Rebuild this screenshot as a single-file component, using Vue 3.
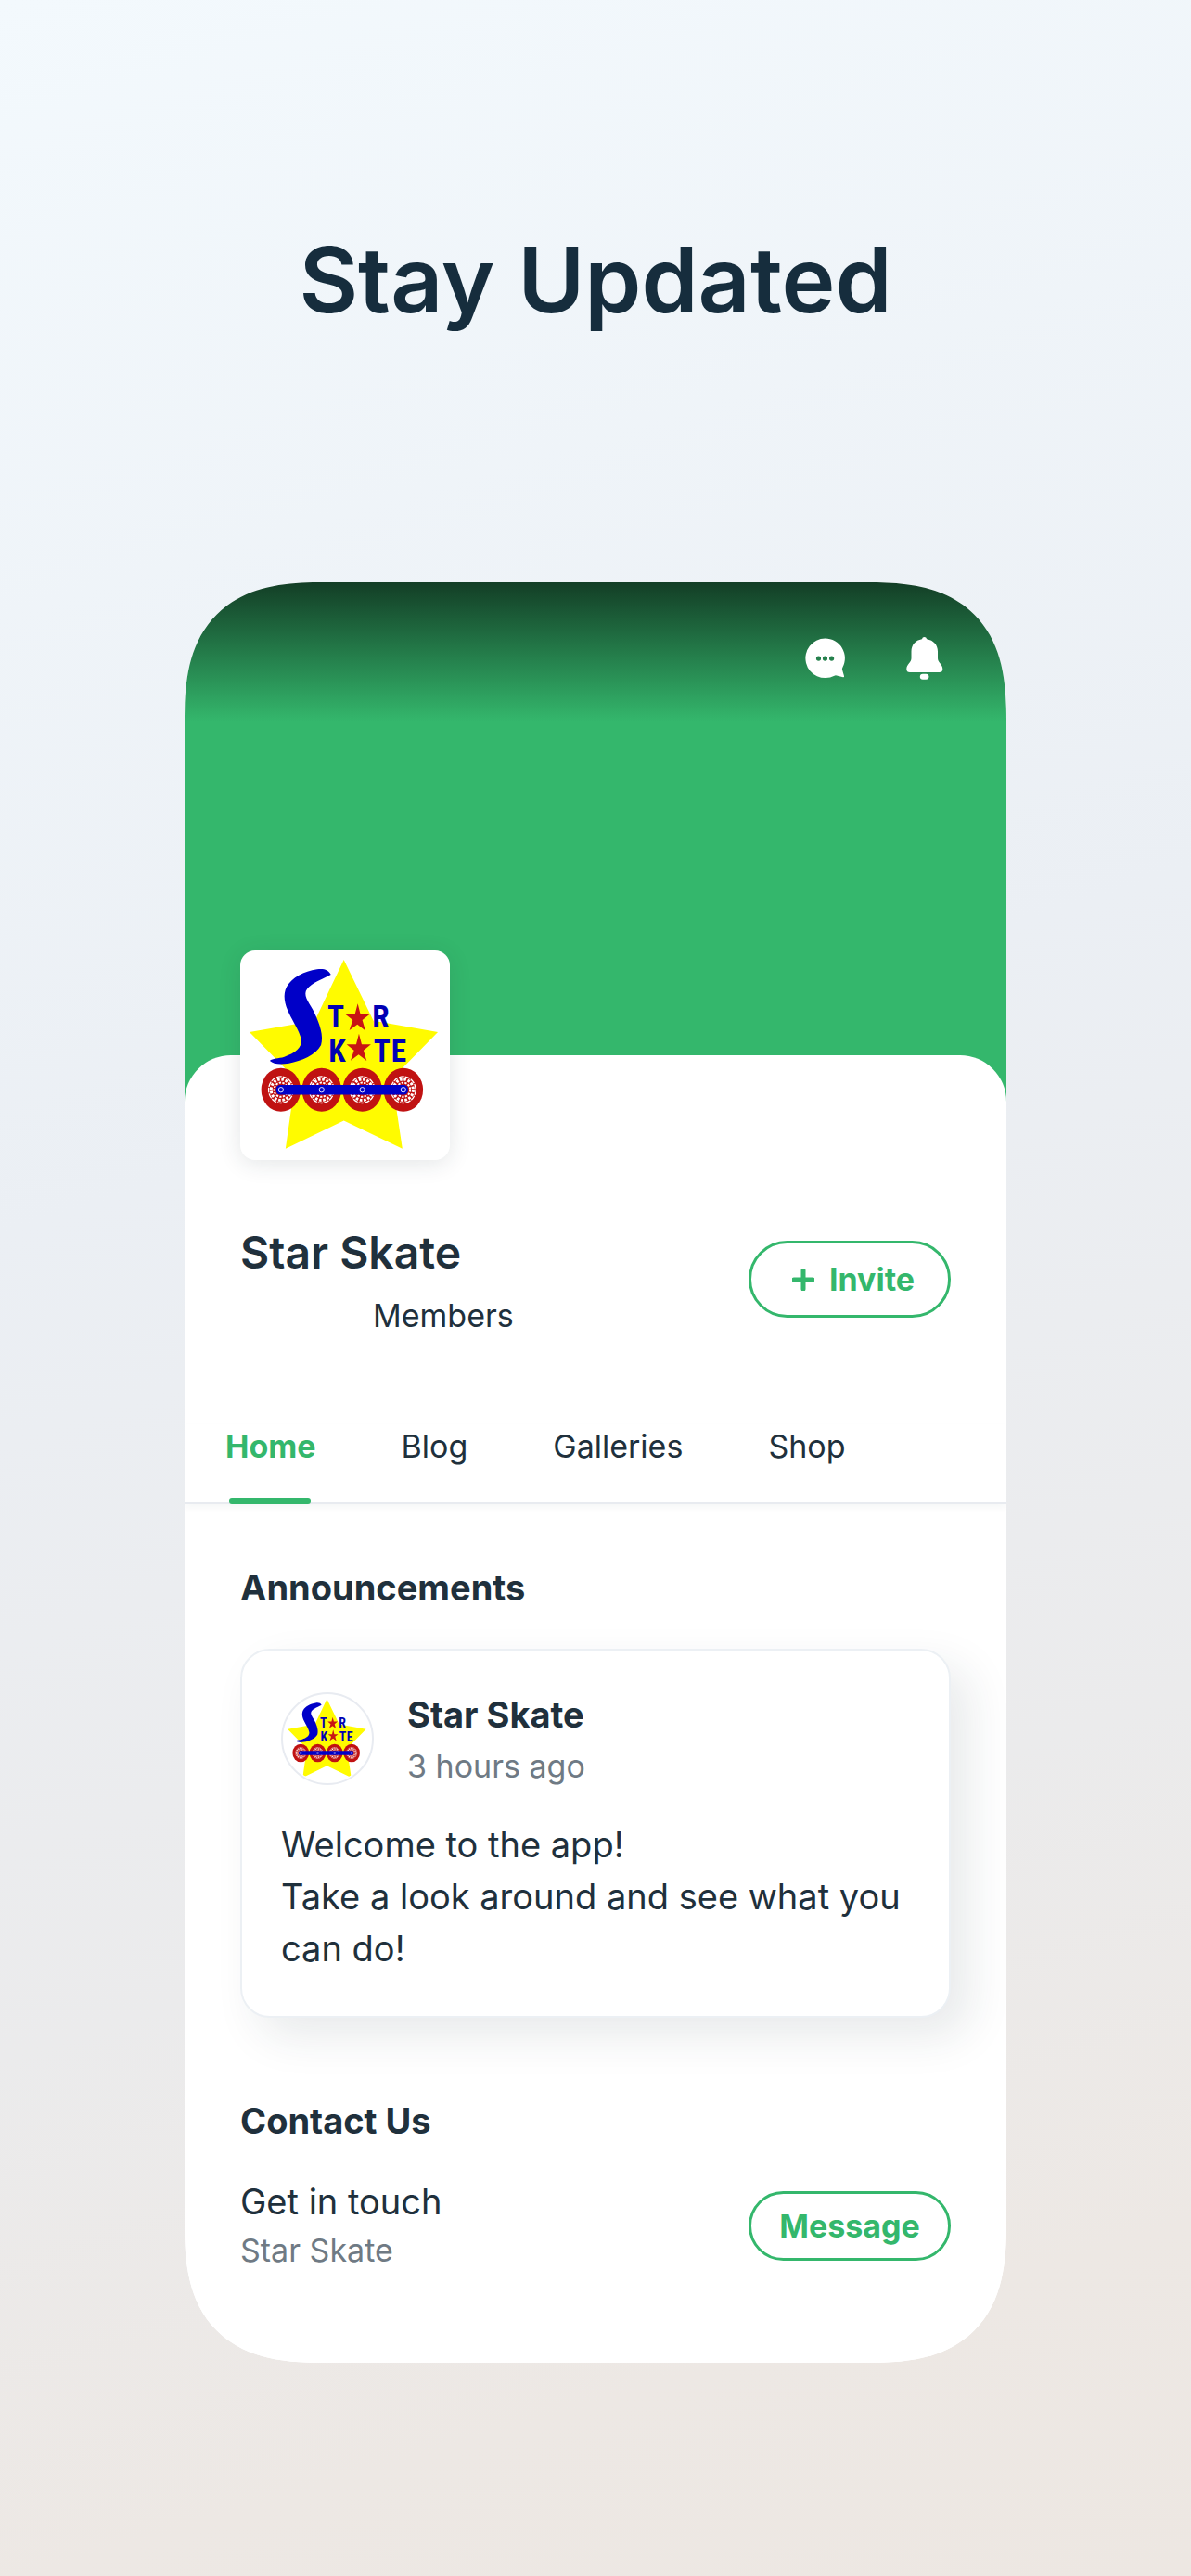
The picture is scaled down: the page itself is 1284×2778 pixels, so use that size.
<script setup>
import { ref } from 'vue'

const tabs = ['Home', 'Blog', 'Galleries', 'Shop']
const active = ref('Home')
const wheels = [188, 320, 452, 585]
</script>

<template>
  <main class="page">
    <h1 class="headline">Stay Updated</h1>

    <section class="phone">
      <header class="cover">
        <button class="icon-button" type="button" aria-label="Chat">
          <svg viewBox="0 0 44 44" width="44" height="44">
            <path
              fill="#fff"
              fill-rule="evenodd"
              d="M21.500 0.500A21.300 21.300 0 1 0 31.500 40.700Q32.500 40 34 40.400L41 42.300Q42.300 42.500 42 41L40.100 34.500Q39.700 33.200 40.300 32A21.300 21.300 0 0 0 21.500 0.500ZM14.500 19.500a2.600 2.600 0 1 1 0 5.200a2.600 2.600 0 1 1 0-5.200ZM21.500 19.500a2.600 2.600 0 1 1 0 5.200a2.600 2.600 0 1 1 0-5.200ZM28.600 19.500a2.600 2.600 0 1 1 0 5.200a2.600 2.600 0 1 1 0-5.200Z"
            />
          </svg>
        </button>
        <button class="icon-button" type="button" aria-label="Notifications">
          <svg viewBox="0 0 40 46" width="40" height="46">
            <path
              fill="#fff"
              d="M19.500 0Q21.500 0 22.200 2.200C29.500 3.400 34 8.500 34 15.500V23C34 27.500 39.300 29.500 39.300 34.500Q39.300 38 35.500 38H4Q0.300 38 0.300 34.500C0.300 29.500 5.500 27.500 5.500 23V15.500C5.500 8.500 9.800 3.400 16.900 2.200Q17.500 0 19.500 0Z"
            />
            <rect x="14.800" y="39.800" width="9.600" height="6" rx="3" fill="#fff" />
          </svg>
        </button>
      </header>

      <div class="sheet">
        <div class="logo-tile">
          <svg class="logo" viewBox="57 45 678 680" role="img" aria-label="Star Skate logo">
            <g id="logo-art">
              <path fill="#fffb00" d="M392 75 488 273 697 310 548 462 582 688 392 597 203 688 235 462 86 310 298 273Z" />
              <path
                fill="#0000c8"
                d="M350 123C341 108 329 103 305 106C262 113 224 133 207 162C193 188 200 218 214 248C228 278 248 305 254 334C258 360 232 379 199 390C180 396 160 394 152 403C164 415 190 415 214 411C254 404 302 384 318 352C327 322 314 283 297 248C283 219 262 198 269 177C277 156 310 143 350 123Z"
              />
              <g class="logo-letters" text-anchor="middle">
                <text x="366" y="296">T</text>
                <text x="512" y="296">R</text>
                <text x="370" y="405">K</text>
                <text x="516" y="405">T</text>
                <text x="570" y="405">E</text>
              </g>
              <path fill="#c81414" d="M437 217 446 252 476 252 452 271 462 305 436 285 410 304 421 271 397 252 428 252Z" />
              <path fill="#c81414" d="M441 315 450 350 480 350 456 369 466 403 440 383 414 402 425 369 401 350 432 350Z" />
              <g v-for="x in wheels" :key="x">
                <ellipse :cx="x" cy="497" rx="64" ry="71" fill="#c01212" />
                <ellipse :cx="x" cy="497" rx="40" ry="43" fill="none" stroke="#fff" stroke-width="4" stroke-dasharray="17 3" />
                <ellipse :cx="x" cy="497" rx="32" ry="34" fill="none" stroke="#fff" stroke-width="9" stroke-dasharray="8 5" />
                <ellipse :cx="x" cy="497" rx="22" ry="23" fill="none" stroke="#fff" stroke-width="6" stroke-dasharray="7 4" />
              </g>
              <rect x="172" y="481" width="428" height="32" rx="14" fill="#0000c8" />
              <g v-for="x in wheels" :key="x">
                <circle :cx="x" cy="497" r="15" fill="#0000c8" />
                <circle :cx="x" cy="497" r="8" fill="none" stroke="#dfe4ff" stroke-width="3" />
              </g>
            </g>
          </svg>
        </div>

        <div class="profile">
          <div>
            <h2 class="name">Star Skate</h2>
            <p class="members">Members</p>
          </div>
          <button class="pill invite" type="button">
            <svg viewBox="0 0 24 24" width="24" height="24" aria-hidden="true">
              <path d="M12 2V22M2 12H22" stroke="currentColor" stroke-width="5" stroke-linecap="round" />
            </svg>
            Invite
          </button>
        </div>

        <nav class="tabs">
          <a
            v-for="tab in tabs"
            :key="tab"
            href="#"
            class="tab"
            :class="{ active: tab === active }"
            @click.prevent="active = tab"
          >{{ tab }}</a>
        </nav>

        <h3 class="section-title announcements">Announcements</h3>
        <article class="card">
          <div class="author">
            <svg class="avatar" viewBox="57 45 678 680" role="img" aria-label="Star Skate"><use href="#logo-art" /></svg>
            <div>
              <h4 class="author-name">Star Skate</h4>
              <p class="muted">3 hours ago</p>
            </div>
          </div>
          <p class="message">Welcome to the app!<br />Take a look around and see what you can do!</p>
        </article>

        <h3 class="section-title contact">Contact Us</h3>
        <div class="contact-row">
          <div>
            <p class="contact-title">Get in touch</p>
            <p class="muted">Star Skate</p>
          </div>
          <button class="pill" type="button">Message</button>
        </div>
      </div>
    </section>
  </main>
</template>

<style>
body {
  margin: 0;
}
</style>

<style scoped>
.page {
  box-sizing: border-box;
  min-height: 100vh;
  padding: 242px 0 230px;
  background: linear-gradient(163deg, #f3f9fd 0%, #ebeff4 42%, #ebebec 70%, #ede8e4 88%, #ede7e2 100%);
  color: #20303c;
  font-family: Inter, 'Liberation Sans', sans-serif;
}

h1,
h2,
h3,
h4,
p {
  margin: 0;
}

.headline {
  color: #162d3d;
  font-size: 98px;
  font-weight: 600;
  line-height: 120px;
  text-align: center;
}

.phone {
  width: 69%;
  margin: 266px auto 0;
  overflow: hidden;
  border-radius: 124px;
  background: #fff;
}

@supports (corner-shape: superellipse(1.4)) {
  .phone {
    border-radius: 150px;
    corner-shape: superellipse(1.4);
  }
}

.cover {
  box-sizing: border-box;
  display: flex;
  justify-content: flex-end;
  align-items: flex-start;
  gap: 65px;
  height: 560px;
  padding: 58px 68px 0;
  background: linear-gradient(#133e26, #34b76c 150px);
}

.icon-button {
  display: flex;
  align-items: center;
  height: 48px;
  padding: 0;
  border: 0;
  background: none;
}

.sheet {
  margin-top: -50px;
  padding: 0 60px 97px;
  border-radius: 50px 50px 0 0;
  background: #fff;
}

.logo-tile {
  position: relative;
  top: -113px;
  width: 226px;
  height: 226px;
  margin-bottom: -113px;
  overflow: hidden;
  border-radius: 16px;
  background: #fff;
  box-shadow: 0 4px 24px rgba(32, 48, 60, 0.12);
}

.logo {
  display: block;
  width: 100%;
  height: 100%;
}

.logo-letters {
  fill: #0000b4;
  font-family: 'Roboto Condensed', Roboto, 'Liberation Sans', sans-serif;
  font-size: 100px;
  font-weight: 700;
}

.profile,
.contact-row {
  display: flex;
  justify-content: space-between;
}

.profile {
  align-items: flex-start;
  padding-top: 72px;
}

.name {
  font-size: 48px;
  font-weight: 600;
  line-height: 56px;
}

.members {
  margin-top: 20px;
  padding-left: 143px;
  font-size: 34px;
  line-height: 40px;
}

.pill {
  box-sizing: border-box;
  display: flex;
  justify-content: center;
  align-items: center;
  gap: 16px;
  width: 218px;
  height: 75px;
  padding: 0;
  border: 3px solid #34b76c;
  border-radius: 42px;
  background: #fff;
  color: #34b76c;
  font-family: inherit;
  font-size: 34px;
  font-weight: 700;
}

.invite {
  height: 83px;
  margin-top: 15px;
  padding-left: 8px;
}

.tabs {
  display: flex;
  gap: 92px;
  margin: 97px -60px 0;
  padding: 0 44px;
  border-bottom: 2px solid #e8ebf0;
  box-shadow: 0 4px 8px rgba(32, 48, 60, 0.04);
}

.tab {
  position: relative;
  padding-bottom: 36px;
  color: inherit;
  font-size: 34px;
  line-height: 48px;
  text-decoration: none;
}

.tab.active {
  color: #34b76c;
  font-weight: 700;
}

.tab.active::after {
  content: '';
  position: absolute;
  right: 6px;
  bottom: -2px;
  left: 4px;
  height: 6px;
  border-radius: 3px;
  background: #34b76c;
}

.section-title {
  font-size: 38px;
  font-weight: 700;
  line-height: 48px;
}

.announcements {
  margin-top: 66px;
}

.card {
  margin-top: 42px;
  padding: 45px 42px;
  border: 2px solid #ecf0f4;
  border-radius: 32px;
  background: #fff;
  box-shadow: 20px 20px 48px rgba(32, 48, 60, 0.1);
}

.author {
  display: flex;
  gap: 36px;
}

.avatar {
  box-sizing: border-box;
  width: 100px;
  height: 100px;
  padding: 1px;
  border: 2px solid #e8ebf1;
  border-radius: 50%;
}

.author-name {
  margin-bottom: 8px;
  font-size: 38px;
  font-weight: 700;
  line-height: 48px;
}

.muted {
  color: #6f7a84;
  font-size: 34px;
  line-height: 48px;
}

.message {
  margin-top: 32px;
  font-size: 38px;
  line-height: 56px;
}

.contact {
  margin-top: 87px;
}

.contact-row {
  align-items: center;
  margin-top: 39px;
}

.contact-title {
  margin-bottom: 5px;
  font-size: 38px;
  line-height: 48px;
}
</style>
